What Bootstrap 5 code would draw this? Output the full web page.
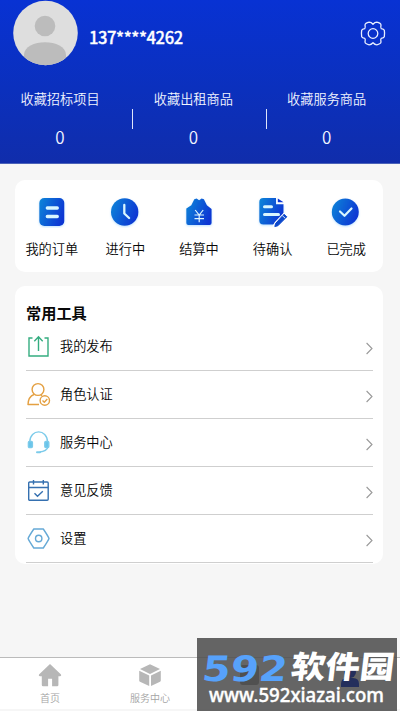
<!DOCTYPE html>
<html lang="zh-CN">
<head>
<meta charset="utf-8">
<meta name="viewport" content="width=device-width, initial-scale=1">
<title>我的</title>
<link rel="stylesheet" href="https://cdn.jsdelivr.net/npm/bootstrap@5.3.0/dist/css/bootstrap.min.css">
<style>
body{width:400px;height:711px;overflow:hidden;background:#f6f6f6;color:#080808;font-family:"Noto Sans CJK SC",sans-serif;font-weight:350;font-size:13.2px;line-height:20px}
svg{display:block;flex:none}
.hero{height:164px;background:linear-gradient(#0832d3,#0b30bd 55%,#102dab);border-bottom:1px solid #4b62b8;color:#fff}
.profile{height:89px;padding:0 14px 0 13px}
.phone{font-size:16.6px;font-weight:500;line-height:24px;letter-spacing:-.42px;margin:25px 0 0 11px;-webkit-text-stroke:.3px #fff}
.gear{margin-top:21px}
.stat{position:relative;width:33.3333%;padding-right:13.3px;color:#f2f5ff}
.stat + .stat::before{content:"";position:absolute;left:-1px;top:20px;width:1px;height:20px;background:#dfe5fa}
.stat .num{font-size:17px;line-height:24px;margin-top:16px}
.panel{margin:0 17px 0 15px;background:#fff;border-radius:10px}
.orders{margin-top:16px;height:92px;padding-top:14px}
.orders svg{margin-bottom:11px}
.tools{margin-top:14px;height:278px;padding:14px 10px 0 11px}
.tools h2{font-size:15.2px;line-height:24px;font-weight:700;margin:0;height:23px}
.tool{height:48px;border-bottom:1px solid #cfcfcf}
.tool span{margin-left:9px;position:relative;top:-1px}
.tool .go{position:relative;top:2px}
.tabs{margin-top:93px;height:52px;border-top:1px solid #bbb;background:#fff;color:#a4a4a4;font-size:10px;line-height:14px;padding-top:3px}
.tabs .tab{width:25%}
.watermark{position:absolute;left:197px;top:638px;width:200px;height:73px;background:rgba(76,76,76,.86)}
</style>
<script src="https://cdn.jsdelivr.net/npm/bootstrap@5.3.0/dist/js/bootstrap.bundle.min.js"></script>
</head>
<body>
<svg width="0" height="0" class="position-absolute"><defs>
<linearGradient id="blue" x1="0" y1=".2" x2="1" y2=".6"><stop stop-color="#0f82d8"/><stop offset="1" stop-color="#0934d3"/></linearGradient>
<filter id="glow" x="-30%" y="-30%" width="160%" height="170%"><feDropShadow dx="0" dy="1" stdDeviation="1" flood-color="#58b5ff" flood-opacity=".4"/></filter>
</defs></svg>
<header class="hero">
  <div class="profile d-flex align-items-start">
    <svg width="65" height="66" viewBox="0 0 65 66"><defs><clipPath id="face"><circle cx="32.5" cy="33" r="32.3"/></clipPath></defs><g clip-path="url(#face)"><path fill="#dedede" d="M0 0h65v66H0z"/><circle cx="32" cy="26" r="10.3" fill="#bcbcbc"/><path d="M11 55c0-17 42-17 42 0v11H11z" fill="#bcbcbc"/></g></svg>
    <div class="phone">137****4262</div>
    <svg class="gear ms-auto" width="26" height="25" viewBox="0 0 26 25" fill="none" stroke="#e9efff" stroke-width="1.3" stroke-linejoin="round"><path d="M9.2 1.2Q11.2 1.2 13 3.2Q14.8 1.2 16.8 1.2Q20.8 2 21 4Q20.4 6.7 21.2 7.6Q23.8 8 24.3 9.2Q24.9 12.5 24.3 15.8Q23.8 17 21.2 17.4Q20.4 18.3 21 21Q20.8 23 16.8 23.8Q14.8 23.8 13 21.8Q11.2 23.8 9.2 23.8Q5.2 23 5 21Q5.6 18.3 4.8 17.4Q2.2 17 1.7 15.8Q1.1 12.5 1.7 9.2Q2.2 8 4.8 7.6Q5.6 6.7 5 4Q5.2 2 9.2 1.2Z"/><circle cx="13" cy="12.5" r="4.8"/></svg>
  </div>
  <div class="d-flex text-center">
    <div class="stat"><div>收藏招标项目</div><div class="num">0</div></div>
    <div class="stat"><div>收藏出租商品</div><div class="num">0</div></div>
    <div class="stat"><div>收藏服务商品</div><div class="num">0</div></div>
  </div>
</header>
<section class="panel orders d-flex text-center">
  <div class="flex-fill w-25 d-flex flex-column align-items-center"><svg width="36" height="34" viewBox="0 0 36 34"><rect x="5.3" y="4" width="25" height="28" rx="5" fill="url(#blue)" filter="url(#glow)"/><path d="M13.3 14h10M13.3 22.5h10" stroke="#d9f6ff" stroke-width="3.3" stroke-linecap="round"/></svg>我的订单</div>
  <div class="flex-fill w-25 d-flex flex-column align-items-center"><svg width="36" height="34" viewBox="0 0 36 34"><circle cx="17.7" cy="18" r="13.7" fill="url(#blue)" filter="url(#glow)"/><path d="M17.3 11v8.5l4.8 4.5" fill="none" stroke="#d9f6ff" stroke-width="2.3" stroke-linecap="round" stroke-linejoin="round"/></svg>进行中</div>
  <div class="flex-fill w-25 d-flex flex-column align-items-center"><svg width="36" height="34" viewBox="0 0 36 34"><path d="M5.3 14.5l5-3.2 3-6 2.3-.7 2.5 1.7 2.5-1.7 2.3.7 3 6 4.7 3.7V29q0 2-2 2H7.3q-2 0-2-2z" fill="url(#blue)" filter="url(#glow)"/><path d="M14.2 16l4 5 4-5M13.5 21h9.5M13.5 24.7h9.5M18.2 21v7.3" fill="none" stroke="#dff6ff" stroke-width="1.2"/></svg>结算中</div>
  <div class="flex-fill w-25 d-flex flex-column align-items-center"><svg width="36" height="34" viewBox="0 0 36 34"><path d="M8.3 4H21v6.2h7.5V21l-8.8 9.5H8.3q-4 0-4-4V8q0-4 4-4z" fill="url(#blue)" filter="url(#glow)"/><path d="M22.8 4.5V8.3h5.7z" fill="#0934d3"/><path d="M9.5 12.8h7M9.5 20.5h14" stroke="#d9f6ff" stroke-width="3" stroke-linecap="round"/><path d="M30.5 20.5l-8.8 9.2-2 3.5" fill="none" stroke="#fff" stroke-width="5"/><path d="M29 20.3l2.8 2.5-9 9-3 .7.8-3z" fill="#0b48cc" stroke="#0b48cc" stroke-width="1"/><path d="M27.2 21.5l3 2.7" stroke="#fff" stroke-width=".8"/></svg>待确认</div>
  <div class="flex-fill w-25 d-flex flex-column align-items-center"><svg width="36" height="34" viewBox="0 0 36 34"><circle cx="17.3" cy="18" r="13.5" fill="url(#blue)" filter="url(#glow)"/><path d="M12 17.5l4.5 4.3 7-7.3" fill="none" stroke="#d9f6ff" stroke-width="2.2" stroke-linecap="round" stroke-linejoin="round"/></svg>已完成</div>
</section>
<section class="panel tools">
  <h2>常用工具</h2>
  <div class="tool d-flex align-items-center"><svg width="25" height="25" viewBox="0 0 25 25" fill="none" stroke="#35ad80" stroke-width="1.4"><path d="M6.5 4H3v18h19V4h-3.5M12.5 17V3.5M8.3 7.2l4.2-4.5 4.2 4.5"/></svg><span>我的发布</span><svg class="go ms-auto" width="7" height="13" viewBox="0 0 7 13" fill="none" stroke="#999" stroke-width="1.1"><path d="M.6 1l5.4 5.5L.6 12"/></svg></div>
  <div class="tool d-flex align-items-center"><svg width="25" height="25" viewBox="0 0 25 25" fill="none" stroke="#e4a042" stroke-width="1.4" stroke-linejoin="round"><circle cx="12" cy="7.5" r="5.9"/><path d="M8 12.5q-5.7 2.2-6 10h11"/><circle cx="18.8" cy="18.5" r="4.7"/><path d="M16.5 18.5l1.8 1.8 3-3.2M15 13.2l1 .5"/></svg><span>角色认证</span><svg class="go ms-auto" width="7" height="13" viewBox="0 0 7 13" fill="none" stroke="#999" stroke-width="1.1"><path d="M.6 1l5.4 5.5L.6 12"/></svg></div>
  <div class="tool d-flex align-items-center"><svg width="25" height="25" viewBox="0 0 25 25" fill="none" stroke="#7ccbea" stroke-width="1.4"><path d="M3.8 12C3.8-1.5 21.5-1.5 21.5 12M22 17q-1.3 4.2-8.3 5"/><rect x="2.4" y="11.5" width="4" height="6" rx="1" fill="#69c4ea"/><rect x="18.8" y="11.5" width="4" height="6" rx="1" fill="#69c4ea"/><path d="M11 22.3h3" stroke-width="2" stroke-linecap="round"/></svg><span>服务中心</span><svg class="go ms-auto" width="7" height="13" viewBox="0 0 7 13" fill="none" stroke="#999" stroke-width="1.1"><path d="M.6 1l5.4 5.5L.6 12"/></svg></div>
  <div class="tool d-flex align-items-center"><svg width="25" height="25" viewBox="0 0 25 25" fill="none" stroke="#3570b0" stroke-width="1.4"><rect x="2.7" y="4" width="19.5" height="18.3" rx="1"/><path d="M2.7 9.5h19.5M7.5 2v4.5M17.3 2v4.5M8.5 15.3l3 3 5.3-5"/></svg><span>意见反馈</span><svg class="go ms-auto" width="7" height="13" viewBox="0 0 7 13" fill="none" stroke="#999" stroke-width="1.1"><path d="M.6 1l5.4 5.5L.6 12"/></svg></div>
  <div class="tool d-flex align-items-center"><svg width="25" height="25" viewBox="0 0 25 25" fill="none" stroke="#65a9d6" stroke-width="1.4" stroke-linejoin="round"><path d="M7.8 3h9.5q5 7.5 5.7 9.5-.7 2-5.7 9.5H7.8q-5-7.5-5.7-9.5.7-2 5.7-9.5z"/><circle cx="12.7" cy="12.5" r="3.2"/></svg><span>设置</span><svg class="go ms-auto" width="7" height="13" viewBox="0 0 7 13" fill="none" stroke="#999" stroke-width="1.1"><path d="M.6 1l5.4 5.5L.6 12"/></svg></div>
</section>
<nav class="tabs d-flex text-center">
  <div class="tab d-flex flex-column align-items-center"><svg width="26" height="30" viewBox="0 0 26 30" fill="#b7b7b7"><path d="M13 3L2 13.5q-.8 1.5 1 1.7h1.8V24q0 1.3 1.3 1.3h5v-7.5h4v7.5h5q1.3 0 1.3-1.3v-8.8H23q1.8-.2 1-1.7z"/></svg>首页</div>
  <div class="tab d-flex flex-column align-items-center"><svg width="26" height="30" viewBox="0 0 26 30" fill="#b7b7b7"><path d="M13 3.3L23 8l-10 5L3 8zM2.2 9.8l10 4.8V25L3 20.8q-.8-.4-.8-1.3zM23.8 9.8l-9.8 4.8V25l9-4.2q.8-.4.8-1.3z"/></svg>服务中心</div>
  <div class="tab d-flex flex-column align-items-center"></div>
  <div class="tab d-flex flex-column align-items-center"></div>
</nav>
<div class="watermark"><svg width="200" height="73" viewBox="0 0 200 73">
<rect x="43" y="27" width="19" height="20" rx="3" fill="#505050"/>
<g fill="#242f5c"><circle cx="153" cy="34" r="6"/><path d="M144 49v-3q0-6 6-6h6q6 0 6 6v3z"/></g>
<g transform="translate(4 42.5) skewX(-7)"><text x="0" y="0" font-family="DejaVu Sans" font-weight="700" font-size="35" fill="#57a2fb" textLength="85" lengthAdjust="spacingAndGlyphs">592</text></g>
<g transform="translate(93 39.5) skewX(-7)"><text x="0" y="0" font-family="Noto Sans CJK SC" font-weight="900" font-size="31" fill="#fff" textLength="103" lengthAdjust="spacingAndGlyphs">软件园</text></g>
<text x="12" y="64" font-family="Noto Sans" font-weight="500" font-size="19.5" fill="#fff" stroke="#fff" stroke-width=".4" textLength="175" lengthAdjust="spacingAndGlyphs">www.592xiazai.com</text>
</svg></div>
</body>
</html>
